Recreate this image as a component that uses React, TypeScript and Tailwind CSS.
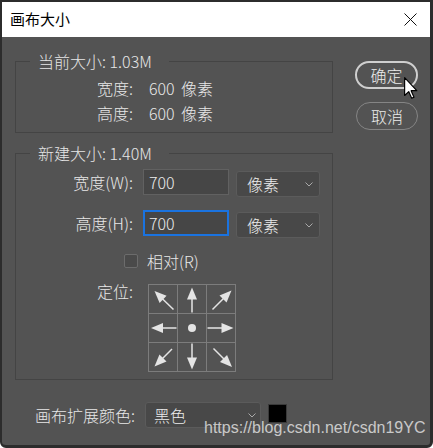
import React from "react";

type Pt = [number, number];

const Arrow = ({ from, to }: { from: Pt; to: Pt }) => {
  const dx = to[0] - from[0];
  const dy = to[1] - from[1];
  const len = Math.hypot(dx, dy);
  const ux = dx / len;
  const uy = dy / len;
  const headLen = 12;
  const half = 5;
  const bx = to[0] - ux * headLen;
  const by = to[1] - uy * headLen;
  const pts = `${to[0]},${to[1]} ${bx - uy * half},${by + ux * half} ${bx + uy * half},${by - ux * half}`;
  return (
    <svg width="28" height="28" viewBox="0 0 28 28">
      <line x1={from[0]} y1={from[1]} x2={bx + ux} y2={by + uy} stroke="#e4e4e4" strokeWidth="1.5" />
      <polygon points={pts} fill="#e4e4e4" />
    </svg>
  );
};

const anchors: (null | { from: Pt; to: Pt })[] = [
  { from: [24.5, 24.5], to: [5.5, 6] },
  { from: [14, 27.5], to: [14, 2.5] },
  { from: [5.5, 24.5], to: [24.5, 5.5] },
  { from: [27.5, 14], to: [2, 14] },
  null,
  { from: [0.5, 14], to: [26.5, 14] },
  { from: [23, 6], to: [5.5, 23.5] },
  { from: [14, 0.5], to: [14, 26.5] },
  { from: [6.5, 5.5], to: [25, 24] },
];

const Select = ({ value, className }: { value: string; className?: string }) => (
  <div
    className={`flex items-center justify-between bg-[#484848] border border-[#5b5b5b] rounded-[3px] text-[16px] text-[#ececec] ${className ?? ""}`}
  >
    <span>{value}</span>
    <svg width="8" height="5" viewBox="0 0 8 5">
      <path d="M0.5 0.5 L4 4 L7.5 0.5" fill="none" stroke="#a9a9a9" strokeWidth="1" />
    </svg>
  </div>
);

const Legend = ({ children }: { children: React.ReactNode }) => (
  <legend className="ml-[14px] pl-[8px] pr-[17px] text-[16px] leading-[20px] text-[#e6e6e6]">
    {children}
  </legend>
);

export default function App() {
  return (
    <div className="relative w-[433px] h-[448px] overflow-hidden bg-[#535353] border-t-2 border-l-2 border-r-[3px] border-b-[3px] border-[#2c2c2c] rounded-b-[6px] font-['Noto_Sans_CJK_SC','Noto_Sans',sans-serif] font-light text-[#e8e8e8]">
      <div className="h-[35px] bg-white flex items-center justify-between pl-[8px] pr-[13px]">
        <span className="text-[15px] font-normal text-black">画布大小</span>
        <svg width="13" height="13" viewBox="0 0 13 13">
          <path d="M0.5 0.5 L12.5 12.5 M12.5 0.5 L0.5 12.5" stroke="#111" strokeWidth="1" />
        </svg>
      </div>

      <div className="flex pl-[13px]">
        <div className="w-[318px]">
          <fieldset className="mt-[14px] border border-[#444444] pb-[7px]">
            <Legend>当前大小: 1.03M</Legend>
            <div className="pt-[4px] pl-[81px] text-[16px]">
              <div className="flex items-center h-[25px]">
                <span className="w-[52px]">宽度:</span>
                <span className="w-[32px]">600</span>
                <span>像素</span>
              </div>
              <div className="flex items-center h-[25px]">
                <span className="w-[52px]">高度:</span>
                <span className="w-[32px]">600</span>
                <span>像素</span>
              </div>
            </div>
          </fieldset>

          <fieldset className="mt-[10px] border border-[#444444] pb-[7px]">
            <Legend>新建大小: 1.40M</Legend>
            <div className="text-[16px]">
              <div className="mt-[6px] flex items-start">
                <span className="w-[117px] h-[26px] leading-[26px] text-right">宽度(W):</span>
                <div className="ml-[10px] w-[86px] h-[26px] bg-[#464646] border border-[#616161] pl-[5px] leading-[24px] text-[#ececec]">
                  700
                </div>
                <Select value="像素" className="ml-[7px] mt-[2px] w-[84px] h-[26px] pl-[10px] pr-[6px]" />
              </div>
              <div className="mt-[13px] flex items-start">
                <span className="w-[117px] h-[26px] leading-[26px] text-right">高度(H):</span>
                <div className="ml-[10px] w-[86px] h-[26px] bg-[#464646] border-2 border-[#1a73e0] pl-[4px] leading-[22px] text-[#ececec]">
                  700
                </div>
                <Select value="像素" className="ml-[7px] mt-[2px] w-[84px] h-[26px] pl-[10px] pr-[6px]" />
              </div>
              <div className="mt-[13px] h-[20px] flex items-center pl-[108px]">
                <div className="w-[14px] h-[14px] border border-[#6c6c6c] bg-[#4a4a4a] rounded-[2px]" />
                <span className="ml-[9px]">相对(R)</span>
              </div>
              <div className="mt-[13px] flex items-start">
                <span className="w-[117px] leading-[14px] text-right">定位:</span>
                <div className="ml-[15px] grid grid-cols-3 border-l border-t border-[#7c7c7c]">
                  {anchors.map((a, i) => (
                    <div
                      key={i}
                      className="w-[29px] h-[29px] border-r border-b border-[#7c7c7c] flex items-center justify-center"
                    >
                      {a ? (
                        <Arrow from={a.from} to={a.to} />
                      ) : (
                        <div className="w-[8px] h-[8px] rounded-full bg-[#e4e4e4]" />
                      )}
                    </div>
                  ))}
                </div>
              </div>
            </div>
          </fieldset>

          <div className="mt-[22px] flex items-start text-[16px]">
            <span className="w-[120px] h-[26px] leading-[26px] text-right">画布扩展颜色:</span>
            <Select value="黑色" className="ml-[10px] w-[116px] h-[26px] pl-[8px] pr-[4px]" />
            <div className="ml-[7px] mt-[2px] w-[19px] h-[19px] bg-black border border-[#3a3a3a]" />
          </div>
        </div>

        <div className="ml-[22px] pt-[24px] flex flex-col gap-[13px]">
          <div className="w-[63px] h-[28px] rounded-full border-2 border-[#cfcfcf] flex items-center justify-center text-[16px] text-[#ececec]">
            确定
          </div>
          <div className="w-[62px] h-[28px] ml-[1px] rounded-full border border-[#858585] flex items-center justify-center text-[16px] text-[#ececec]">
            取消
          </div>
        </div>
      </div>

      <div className="absolute left-[202px] top-[417px] leading-[18px] text-[16px] font-normal text-white/70 font-['Liberation_Sans',Arial,sans-serif]">
        https://blog.csdn.net/csdn19YC
      </div>

      <svg className="absolute left-[402px] top-[75px]" width="14" height="22" viewBox="0 0 12 19">
        <path
          d="M0.5 0.5 L0.5 16 L4 12.6 L6.6 18.3 L8.6 17.4 L6.1 11.8 L11 11.8 Z"
          fill="#fff"
          stroke="#000"
          strokeWidth="1"
          strokeLinejoin="round"
        />
      </svg>
    </div>
  );
}
